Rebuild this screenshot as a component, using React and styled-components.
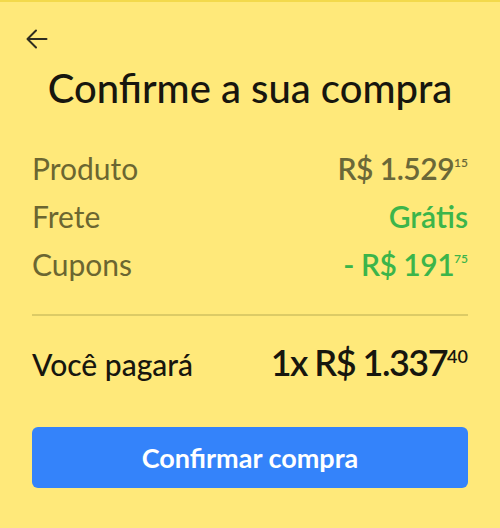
import React from "react";
import styled, { createGlobalStyle } from "styled-components";

const Global = createGlobalStyle`
  html, body { margin: 0; padding: 0; background: #FFE97A; }
  * { box-sizing: border-box; }
  body { font-family: Lato, "Open Sans", Arial, sans-serif; }
`;

const Page = styled.div`
  width: 500px;
  height: 528px;
  background: #FFE97A;
  border-top: 2px solid #F3D94C;
  display: flex;
  flex-direction: column;
`;

const TopBar = styled.div`
  height: 62px;
  padding: 25px 0 0 25px;
`;

const BackButton = styled.button`
  border: 0;
  background: transparent;
  padding: 0;
  width: 24px;
  height: 24px;
  display: flex;
  align-items: center;
  justify-content: center;
  color: #2e2d20;
  cursor: pointer;
`;

const Title = styled.h1`
  margin: 0;
  text-align: center;
  font-size: 40px;
  font-weight: 500;
  color: #17160e;
  line-height: 48px;
`;

const Body = styled.div`
  padding: 38px 32px 0;
  display: flex;
  flex-direction: column;
`;

const Rows = styled.div`
  display: flex;
  flex-direction: column;
  gap: 12px;
  padding-bottom: 32px;
  border-bottom: 2px solid #DCCB66;
`;

const Row = styled.div`
  display: flex;
  justify-content: space-between;
  align-items: baseline;
  font-size: 30px;
  line-height: 36px;
`;

const Label = styled.span`
  color: #6B6631;
`;

const Value = styled.span`
  color: ${(p) => p.$color || "#6B6838"};
  font-size: ${(p) => (p.$fontSize ? `${p.$fontSize}px` : "inherit")};
  font-weight: 600;
  white-space: nowrap;
  letter-spacing: ${(p) => p.$spacing || 0}px;
`;

const Cents = styled.span`
  font-size: ${(p) => p.$size || 12}px;
  position: relative;
  top: ${(p) => p.$top || -13}px;
  margin-left: 0;
  letter-spacing: 0;
  line-height: 1;
`;

const TotalRow = styled.div`
  display: flex;
  justify-content: space-between;
  align-items: baseline;
  padding: 24px 0 0;
  height: 68px;
  line-height: 44px;
`;

const TotalLabel = styled.span`
  font-size: 30px;
  font-weight: 500;
  color: #17160e;
`;

const ConfirmButton = styled.button`
  margin-top: 43px;
  height: 61px;
  width: 100%;
  border: 0;
  border-radius: 6px;
  background: #3483FA;
  color: #fff;
  font-family: inherit;
  font-size: 27px;
  font-weight: 700;
  cursor: pointer;
`;

const Price = ({ main, cents, color, size, top, spacing, fontSize }) => (
  <Value $color={color} $spacing={spacing} $fontSize={fontSize}>
    {main}
    <Cents $size={size} $top={top}>{cents}</Cents>
  </Value>
);

export default function App() {
  return (
    <>
      <Global />
      <Page>
        <TopBar>
          <BackButton aria-label="Voltar">
            <svg width="24" height="24" viewBox="0 0 24 24" fill="none" stroke="currentColor" strokeWidth="2" strokeLinecap="round" strokeLinejoin="round">
              <path d="M21.5 12H3" />
              <path d="M11 3.5L2.5 12l8.5 8.5" />
            </svg>
          </BackButton>
        </TopBar>
        <Title>Confirme a sua compra</Title>
        <Body>
          <Rows>
            <Row>
              <Label>Produto</Label>
              <Price main="R$ 1.529" cents="15" spacing={-0.5} />
            </Row>
            <Row>
              <Label>Frete</Label>
              <Value $color="#3CB54A">Grátis</Value>
            </Row>
            <Row>
              <Label>Cupons</Label>
              <Price main="- R$ 191" cents="75" color="#3CB54A" spacing={-0.5} />
            </Row>
          </Rows>
          <TotalRow>
            <TotalLabel>Você pagará</TotalLabel>
            <Price main="1x R$ 1.337" cents="40" color="#17160e" fontSize={36} size={18} top={-13} spacing={-1.5} />
          </TotalRow>
          <ConfirmButton>Confirmar compra</ConfirmButton>
        </Body>
      </Page>
    </>
  );
}
